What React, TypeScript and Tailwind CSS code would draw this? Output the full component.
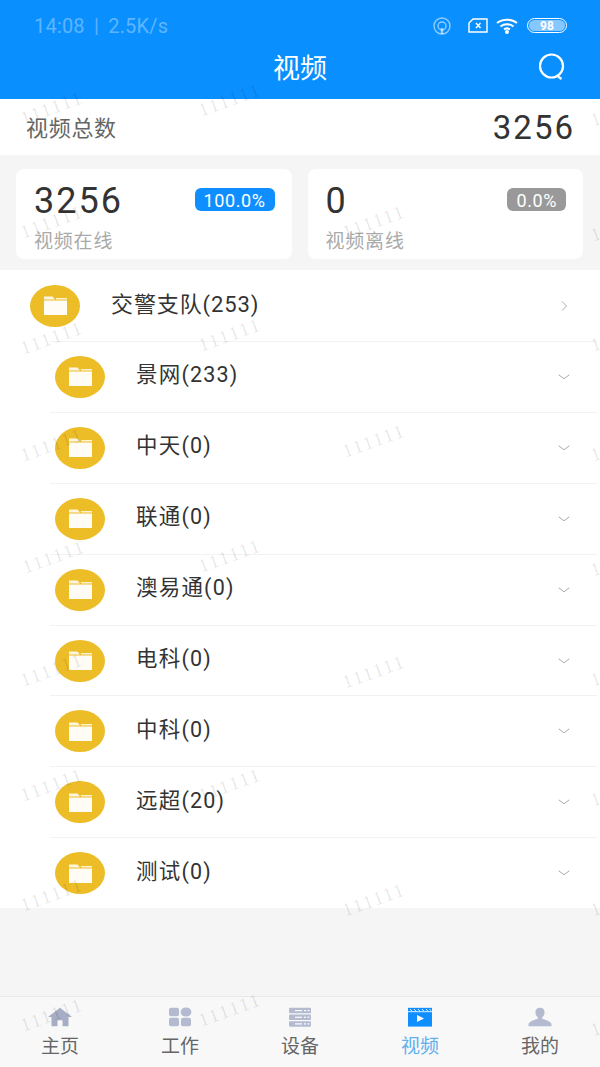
import React from "react";

const font = "font-['Roboto','Noto_Sans_CJK_SC',sans-serif]";

// watermark centres, read off the picture
const marks = [
  [52, 108], [230, 100], [622, 110],
  [52, 222], [374, 222], [622, 225],
  [52, 338], [230, 335], [622, 335],
  [52, 445], [374, 441], [622, 445],
  [54, 557], [230, 556], [622, 560],
  [52, 670], [374, 672], [622, 670],
  [52, 785], [230, 785], [622, 790],
  [52, 895], [374, 900], [622, 900],
  [52, 1015], [230, 1010], [622, 1020],
];

const groups = ["景网(233)", "中天(0)", "联通(0)", "澳易通(0)", "电科(0)", "中科(0)", "远超(20)", "测试(0)"];

const FolderBadge = () => (
  <div className="w-[50px] h-[42px] rounded-[50%] bg-[#edbd28] flex items-center justify-center shrink-0">
    <svg width="25" height="21" viewBox="0 0 25 21">
      <path d="M1 1.5h8.5l2.5 3h-11z" fill="#fff" opacity="0.85" />
      <path d="M1 5.5h23v14.5h-23z" fill="#fff" opacity="0.95" />
      <path d="M12.5 3h11.5v1.5h-10.5z" fill="#fff" opacity="0.8" />
    </svg>
  </div>
);

const Chevron = ({ right }: { right?: boolean }) => (
  <svg width="12" height="12" viewBox="0 0 12 12" className="shrink-0">
    <path
      d={right ? "M4 1.5l4.5 4.5-4.5 4.5" : "M.7 3.8l5.3 4 5.3-4"}
      fill="none"
      stroke="#aaa"
      strokeWidth="1"
    />
  </svg>
);

const StatCard = ({ num, pct, label, blue }: { num: string; pct: string; label: string; blue?: boolean }) => (
  <div className="flex-1 h-[90px] bg-white rounded-[8px] pl-[18px] pr-[17px] pt-[13px]">
    <div className="flex justify-between items-start">
      <span className="text-[36px] leading-[38px] text-[#333] tracking-[2px]">{num}</span>
      <span
        className={`mt-[6px] h-[23px] rounded-[6px] px-[9px] text-[18px] leading-[25px] tracking-[0.6px] text-white ${
          blue ? "bg-[#0f8fff]" : "bg-[#999]"
        }`}
      >
        {pct}
      </span>
    </div>
    <div className="mt-[10px] text-[19px] leading-[24px] text-[#aaa] tracking-[0.8px]">{label}</div>
  </div>
);

const tabs = [
  { label: "主页", icon: "home" },
  { label: "工作", icon: "work" },
  { label: "设备", icon: "device" },
  { label: "视频", icon: "video" },
  { label: "我的", icon: "me" },
];

const TabIcon = ({ name }: { name: string }) => {
  const c = "#b4bbd0";
  if (name === "home")
    return (
      <svg width="26" height="20" viewBox="0 0 26 24" preserveAspectRatio="none">
        <path d="M13 1L1 12h3.5v11h6v-7h5v7h6V12H25z" fill="#a6adc4" />
      </svg>
    );
  if (name === "work")
    return (
      <svg width="26" height="20" viewBox="0 0 26 24" preserveAspectRatio="none">
        <rect x="2" y="1" width="10" height="10" rx="2" fill={c} />
        <circle cx="19" cy="6" r="5.4" fill={c} />
        <rect x="2" y="13" width="10" height="10" rx="2" fill={c} />
        <rect x="14" y="13" width="10" height="10" rx="2" fill={c} />
      </svg>
    );
  if (name === "device")
    return (
      <svg width="26" height="20" viewBox="0 0 26 24" preserveAspectRatio="none">
        {[1, 9, 17].map((y) => (
          <g key={y}>
            <rect x="2" y={y} width="22" height="6.6" rx="1" fill={c} />
            <rect x="8" y={y + 2.6} width="7" height="1.4" fill="#fff" />
            <rect x="17" y={y + 2.6} width="2" height="1.4" fill="#fff" />
            <rect x="20.5" y={y + 2.6} width="2" height="1.4" fill="#fff" />
          </g>
        ))}
      </svg>
    );
  if (name === "video")
    return (
      <svg width="26" height="20" viewBox="0 0 26 24" preserveAspectRatio="none">
        <rect x="1" y="1" width="24" height="22.5" fill="#0f8fff" />
        <path d="M3 2.500l2 2.500M7 2.500l2 2.500M11 2.500l2 2.500M15 2.500l2 2.500M19 2.500l2 2.500M22.500 2.500l1.500 2" stroke="#fff" strokeWidth="1" />
        <rect x="1" y="5.200" width="24" height="1" fill="#fff" />
        <path d="M10 9.500l7 4.200-7 4.200z" fill="#fff" />
      </svg>
    );
  return (
    <svg width="26" height="20" viewBox="0 0 26 24" preserveAspectRatio="none">
      <path d="M13 1c3 0 4.600 2.200 4.600 5.400 0 2.600-1 4.800-2.400 6v1.800c2.600 1.200 7.800 2.600 9.300 6.100V23h-23v-2.700c1.500-3.500 6.700-4.900 9.300-6.100v-1.800c-1.400-1.200-2.400-3.400-2.400-6C8.400 3.200 10 1 13 1z" fill={c} />
    </svg>
  );
};

export default function App() {
  return (
    <div className={`${font} relative w-[600px] h-[1067px] overflow-hidden bg-[#f5f5f5] flex flex-col`}>
      {/* blue header with status bar */}
      <div className="h-[99px] bg-[#0a8fff] shrink-0 flex flex-col">
        <div className="h-[51px] flex items-center pl-[34px] pr-[33px] justify-between">
          <span className="text-[20px] text-white/35 tracking-[0.2px] [word-spacing:4px] mt-[1px]">14:08 | 2.5K/s</span>
          <div className="flex items-center">
            <svg width="20" height="20" viewBox="0 0 20 20" fill="none" stroke="#fff" strokeOpacity="0.55" strokeWidth="1.4" className="mr-[4px]">
              <circle cx="10" cy="10" r="8" />
              <circle cx="10" cy="10" r="4" />
              <path d="M10 12v6" strokeWidth="2.5" />
            </svg>
            <svg width="20" height="15" viewBox="0 0 20 15" className="ml-[12px]" fill="none" stroke="#fff" strokeWidth="1.4">
              <path d="M5 1h14v13H1V5z" />
              <path d="M8 5l4.500 5M12.500 5l-4.500 5" />
            </svg>
            <svg width="22" height="16" viewBox="0 0 22 16" className="ml-[8px]" fill="none" stroke="#fff" strokeWidth="2">
              <path d="M1 5c5.500-4.500 14.500-4.500 20 0M4.500 8.500c3.500-3 9.500-3 13 0M8 11.500c1.700-1.300 4.300-1.300 6 0" />
              <circle cx="11" cy="14" r="1" fill="#fff" />
            </svg>
            <div className="ml-[9px] w-[40px] h-[15px] rounded-full border border-white flex items-center overflow-hidden p-[1px]">
              <div className="w-full h-full rounded-full bg-white/50 text-[12px] leading-[12px] font-bold text-white text-center">98</div>
            </div>
          </div>
        </div>
        <div className="flex-1 relative flex items-center justify-center pb-[12px]">
          <span className="text-[27px] leading-[36px] text-white">视频</span>
          <svg width="30" height="30" viewBox="0 0 30 30" className="absolute right-[33px] top-[1px]" fill="none" stroke="#fff" strokeWidth="2.2">
            <circle cx="14.500" cy="14" r="11.500" />
            <path d="M21 24.500l3.500 2.500" />
          </svg>
        </div>
      </div>

      {/* total */}
      <div className="h-[56px] bg-white flex items-center justify-between pl-[26px] pr-[25px] pt-[2px] shrink-0">
        <span className="text-[22px] text-[#666] tracking-[0.7px]">视频总数</span>
        <span className="text-[33px] text-[#333] tracking-[2px]">3256</span>
      </div>

      {/* online / offline */}
      <div className="h-[115px] shrink-0 flex gap-[16px] pl-[16px] pr-[17px] pt-[14px]">
        <StatCard num="3256" pct="100.0%" label="视频在线" blue />
        <StatCard num="0" pct="0.0%" label="视频离线" />
      </div>

      {/* folder list */}
      <div className="bg-white shrink-0">
        <div className="h-[71px] flex items-center pl-[30px] pr-[30px]">
          <FolderBadge />
          <span className="ml-[31px] flex-1 text-[22px] leading-[30px] tracking-[0.9px] text-[#333] pb-[2px]">交警支队(253)</span>
          <Chevron right />
        </div>
        {groups.map((g) => (
          <div key={g} className="ml-[50px] mr-[3px] h-[70.9px] border-t border-[#f2f2f2] flex items-center pl-[5px] pr-[27px]">
            <FolderBadge />
            <span className="ml-[31px] flex-1 text-[21.5px] leading-[30px] tracking-[1.2px] text-[#333] pb-[3px]">{g}</span>
            <Chevron />
          </div>
        ))}
      </div>

      <div className="flex-1" />

      {/* tab bar */}
      <div className="h-[71px] shrink-0 bg-[#f8f8f8] border-t border-[#e8e8e8] flex">
        {tabs.map((t) => (
          <div key={t.label} className="flex-1 flex flex-col items-center pt-[10px]">
            <TabIcon name={t.icon} />
            <span className={`mt-[8px] text-[19px] leading-[24px] ${t.icon === "video" ? "text-[#5fb0ee]" : "text-[#666]"}`}>
              {t.label}
            </span>
          </div>
        ))}
      </div>

      {/* watermark layer */}
      {marks.map(([x, y], i) => (
        <span
          key={i}
          className="absolute font-['Liberation_Serif',serif] text-[19px] leading-[20px] tracking-[2px] text-black/10 pointer-events-none -translate-x-1/2 -translate-y-1/2 -rotate-[20deg]"
          style={{ left: x, top: y }}
        >
          111111
        </span>
      ))}
    </div>
  );
}
